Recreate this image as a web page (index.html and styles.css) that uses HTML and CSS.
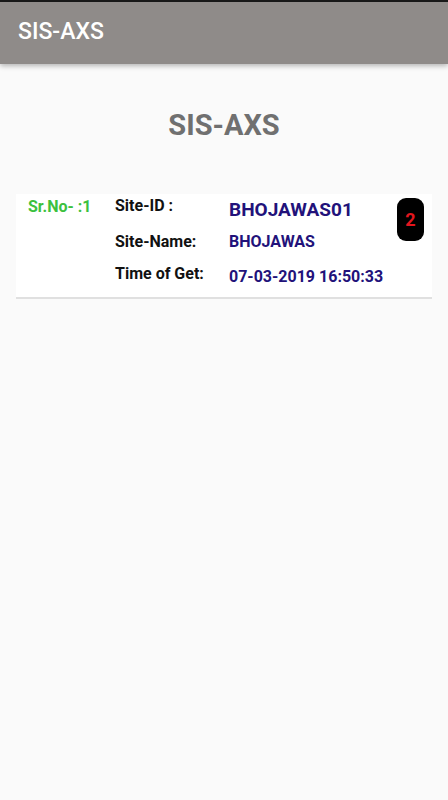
FILE: index.html
```html
<!DOCTYPE html>
<html>
<head>
<meta charset="utf-8">
<link rel="stylesheet" href="styles.css">
</head>
<body>
<div class="statusbar"></div>
<header class="toolbar"><span class="toolbar-title">SIS-AXS</span></header>
<main class="content">
  <h1 class="heading">SIS-AXS</h1>
  <div class="card">
    <div class="srno">Sr.No- :1</div>
    <div class="fields">
      <div class="label l1">Site-ID :</div>
      <div class="value v1">BHOJAWAS01</div>
      <div class="label l2">Site-Name:</div>
      <div class="value v2">BHOJAWAS</div>
      <div class="label l3">Time of Get:</div>
      <div class="value v3">07-03-2019 16:50:33</div>
    </div>
    <div class="badge">2</div>
  </div>
</main>
</body>
</html>
```
FILE: styles.css
```css
html, body {
  margin: 0;
  padding: 0;
}
body {
  width: 448px;
  height: 800px;
  background: #fafafa;
  font-family: Roboto, "Liberation Sans", sans-serif;
  overflow: hidden;
}
.statusbar {
  height: 2px;
  background: #1a1a1a;
}
.toolbar {
  height: 62px;
  background: #8f8b89;
  display: flex;
  align-items: center;
  padding-left: 18px;
  box-shadow: 0 2px 5px rgba(0,0,0,0.28);
  position: relative;
}
.toolbar-title {
  color: #ffffff;
  font-size: 23px;
  font-weight: 500;
  line-height: 28px;
  margin-top: -2px;
}
.content {
  padding: 0 16px;
}
.heading {
  margin: 43.5px 0 0 0;
  text-align: center;
  font-size: 29px;
  font-weight: 700;
  line-height: 34px;
  color: #707070;
  height: 34px;
}
.card {
  margin-top: 52.5px;
  background: #ffffff;
  border-bottom: 2px solid #e0e0e0;
  display: flex;
  align-items: flex-start;
  padding: 2px 8px 10.5px 12px;
}
.srno {
  width: 87px;
  flex: none;
  margin-top: 1px;
  font-size: 16px;
  font-weight: 700;
  line-height: 19px;
  color: #3cc13e;
}
.fields {
  flex: 1;
  display: grid;
  grid-template-columns: 114px 1fr;
  align-items: start;
}
.label {
  font-size: 16px;
  font-weight: 700;
  line-height: 19px;
  color: #111111;
}
.value {
  font-weight: 700;
  color: #22127a;
}
.v1 {
  font-size: 19px;
  line-height: 23px;
  margin-top: 2px;
}
.l2, .v2 {
  margin-top: 10.5px;
}
.v2 {
  font-size: 16px;
  line-height: 19px;
}
.l3 {
  margin-top: 13px;
}
.v3 {
  margin-top: 16.4px;
  font-size: 16px;
  line-height: 20px;
}
.badge {
  flex: none;
  width: 27px;
  height: 43px;
  margin-top: 2px;
  background: #000000;
  border-radius: 9px;
  color: #e3161e;
  font-size: 18px;
  font-weight: 700;
  display: flex;
  align-items: center;
  justify-content: center;
}
```
